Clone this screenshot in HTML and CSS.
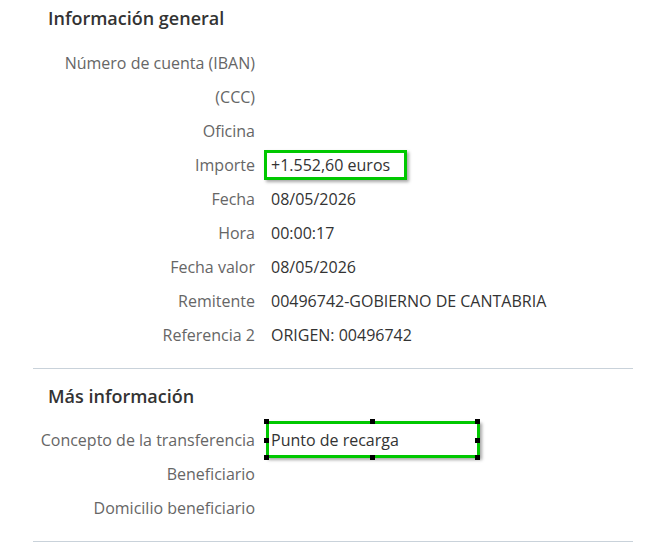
FILE: index.html
```html
<!DOCTYPE html>
<html lang="es">
<head>
<meta charset="utf-8">
<link rel="stylesheet" href="styles.css">
</head>
<body>
<div class="page">
  <section class="block">
    <h2 class="title">Información general</h2>
    <dl class="rows">
      <dt>Número de cuenta (IBAN)</dt><dd></dd>
      <dt>(CCC)</dt><dd></dd>
      <dt>Oficina</dt><dd></dd>
      <dt>Importe</dt><dd class="mark">+1.552,60 euros</dd>
      <dt>Fecha</dt><dd>08/05/2026</dd>
      <dt>Hora</dt><dd>00:00:17</dd>
      <dt>Fecha valor</dt><dd>08/05/2026</dd>
      <dt>Remitente</dt><dd>00496742-GOBIERNO DE CANTABRIA</dd>
      <dt>Referencia 2</dt><dd>ORIGEN: 00496742</dd>
    </dl>
  </section>
  <section class="block second">
    <h2 class="title">Más información</h2>
    <dl class="rows">
      <dt>Concepto de la transferencia</dt><dd class="sel">Punto de recarga<i class="h tl"></i><i class="h tm"></i><i class="h tr"></i><i class="h ml"></i><i class="h mr"></i><i class="h bl"></i><i class="h bm"></i><i class="h br"></i></dd>
      <dt>Beneficiario</dt><dd></dd>
      <dt>Domicilio beneficiario</dt><dd></dd>
    </dl>
  </section>
</div>
</body>
</html>
```

FILE: styles.css
```css
html, body {
  margin: 0;
  padding: 0;
  background: #ffffff;
}
body {
  font-family: "Open Sans", "Liberation Sans", sans-serif;
  font-size: 16px;
  color: #333333;
}
.page {
  width: 600px;
  margin-left: 33px;
}
.block {
  padding-top: 6px;
  padding-bottom: 16px;
  border-bottom: 1px solid #c9d2da;
}
.block.second {
  padding-top: 15px;
  padding-bottom: 16px;
}
.title {
  margin: 0 0 16px 15px;
  font-size: 18px;
  font-weight: 600;
  line-height: 24px;
  color: #333333;
}
.second .title {
  margin-bottom: 15px;
}
.rows {
  display: grid;
  grid-template-columns: 222px 1fr;
  grid-auto-rows: 34px;
  column-gap: 16px;
  margin: 0;
}
.rows dt {
  color: #666666;
  display: flex;
  align-items: center;
  justify-content: flex-end;
  white-space: nowrap;
}
.rows dd {
  margin: 0;
  display: flex;
  align-items: center;
  color: #333333;
  white-space: nowrap;
}
.mark, .sel {
  position: relative;
}
.mark::after {
  content: "";
  position: absolute;
  left: -7px;
  top: 2px;
  width: 137px;
  height: 24px;
  border: 3px solid #00c800;
  box-shadow: 2px 2px 3px rgba(0,0,0,0.35);
}
.sel::after {
  content: "";
  position: absolute;
  left: -5px;
  top: -2px;
  width: 208px;
  height: 31px;
  border: 3px solid #00c800;
  box-shadow: 2px 2px 3px rgba(0,0,0,0.35);
}
.h {
  position: absolute;
  width: 5px;
  height: 5px;
  background: #000;
  z-index: 2;
}
.tl { left: -7px; top: -4px; }
.tm { left: 99px; top: -4px; }
.tr { left: 204px; top: -4px; }
.ml { left: -7px; top: 15px; }
.mr { left: 204px; top: 15px; }
.bl { left: -7px; top: 32px; }
.bm { left: 99px; top: 32px; }
.br { left: 204px; top: 32px; }
```
